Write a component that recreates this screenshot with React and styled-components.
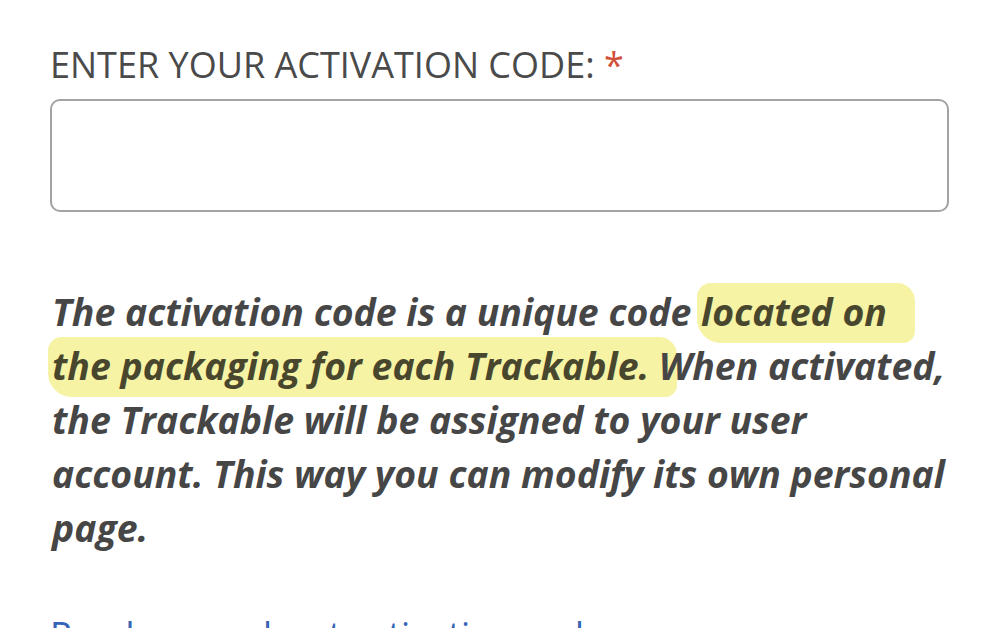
import React from 'react'
import styled, { createGlobalStyle } from 'styled-components';

const Global = createGlobalStyle`
    html, body {
        margin: 0;
        padding: 0;
        background: #ffffff;
        overflow: hidden;
    }
    body {
        font-family: "Open Sans", "Noto Sans", sans-serif;
        color: #444444;
    }
`;

const Page = styled.main`
    width: 1000px;
    height: 628px;
    box-sizing: border-box;
    padding: 41px 51px 0 50px;
    overflow: hidden;
`;

const Label = styled.label`
    display: block;
    font-size: 36px;
    font-weight: 400;
    line-height: 48px;
    color: #4a4a4a;
`;

const Required = styled.span`
    color: #d2503a;
`;

const Input = styled.input`
    display: block;
    box-sizing: border-box;
    width: 899px;
    height: 113px;
    margin-top: 10px;
    border: 2px solid #a3a3a3;
    border-radius: 10px;
    background: #ffffff;
    font: inherit;
    outline: none;
`;

const Hint = styled.p`
    margin: 73px 0 0 2px;
    font-size: 37.4px;
    font-weight: 700;
    font-style: italic;
    line-height: 54px;
    color: #464646;
`;

const Marker = styled.span`
    background: #f6f3a4;
    color: #48472e;
    padding: 3px 28px 6px 4px;
    margin: 0 -28px 0 -4px;
    border-radius: 14px 18px 12px 24px;
    box-decoration-break: clone;
    -webkit-box-decoration-break: clone;
`;

const MoreLink = styled.a`
    display: block;
    margin-top: 56px;
    font-size: 36px;
    line-height: 48px;
    color: #3563b5;
    text-decoration: none;
`;

const App = () => (
    <Page>
        <Global />
        <Label htmlFor="code">ENTER YOUR ACTIVATION CODE: <Required>*</Required></Label>
        <Input id="code" type="text" />
        <Hint>
            The activation code is a unique code <Marker>located on the packaging for each Trackable.</Marker> When activated,
            the Trackable will be assigned to your user account. This way you can modify its own personal page.
        </Hint>
        <MoreLink href="#">Read more about activation codes</MoreLink>
    </Page>
)

export default App;
